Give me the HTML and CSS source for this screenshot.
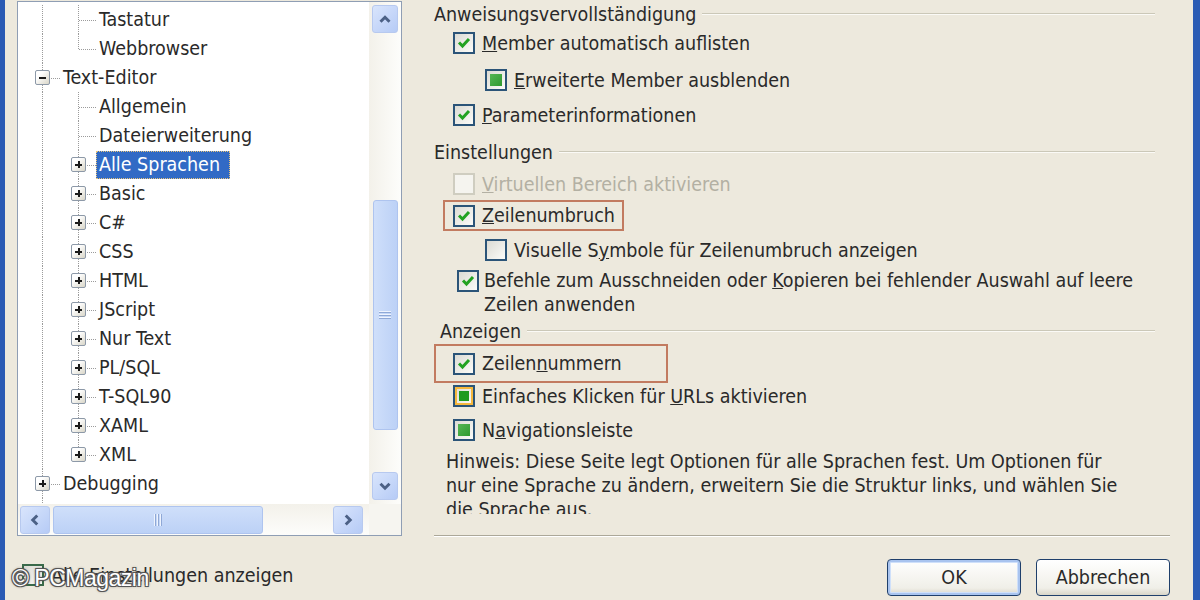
FILE: index.html
```html
<!DOCTYPE html>
<html lang="de">
<head>
    <meta charset="UTF-8">
    <title>Optionen - Text-Editor - Alle Sprachen</title>
    <link rel="stylesheet" href="styles.css">
</head>
<body>
<div class="window">
    <div class="frame"></div>
    <div class="dialog">
        <div class="main">
            <div class="nav">
                <div class="tree-box">
                    <div class="tree-rows">
                        <div class="row"><i class="cell pipe"></i><i class="cell tee"></i><span class="node">Tastatur</span></div>
                        <div class="row"><i class="cell pipe"></i><i class="cell end"></i><span class="node">Webbrowser</span></div>
                        <div class="row"><i class="cell tee"><b class="exp"></b></i><span class="node">Text-Editor</span></div>
                        <div class="row"><i class="cell pipe"></i><i class="cell tee"></i><span class="node">Allgemein</span></div>
                        <div class="row"><i class="cell pipe"></i><i class="cell tee"></i><span class="node">Dateierweiterung</span></div>
                        <div class="row"><i class="cell pipe"></i><i class="cell tee"><b class="exp plus"></b></i><span class="node selected">Alle Sprachen</span></div>
                        <div class="row"><i class="cell pipe"></i><i class="cell tee"><b class="exp plus"></b></i><span class="node">Basic</span></div>
                        <div class="row"><i class="cell pipe"></i><i class="cell tee"><b class="exp plus"></b></i><span class="node">C#</span></div>
                        <div class="row"><i class="cell pipe"></i><i class="cell tee"><b class="exp plus"></b></i><span class="node">CSS</span></div>
                        <div class="row"><i class="cell pipe"></i><i class="cell tee"><b class="exp plus"></b></i><span class="node">HTML</span></div>
                        <div class="row"><i class="cell pipe"></i><i class="cell tee"><b class="exp plus"></b></i><span class="node">JScript</span></div>
                        <div class="row"><i class="cell pipe"></i><i class="cell tee"><b class="exp plus"></b></i><span class="node">Nur Text</span></div>
                        <div class="row"><i class="cell pipe"></i><i class="cell tee"><b class="exp plus"></b></i><span class="node">PL/SQL</span></div>
                        <div class="row"><i class="cell pipe"></i><i class="cell tee"><b class="exp plus"></b></i><span class="node">T-SQL90</span></div>
                        <div class="row"><i class="cell pipe"></i><i class="cell tee"><b class="exp plus"></b></i><span class="node">XAML</span></div>
                        <div class="row"><i class="cell pipe"></i><i class="cell end"><b class="exp plus"></b></i><span class="node">XML</span></div>
                        <div class="row"><i class="cell tee"><b class="exp plus"></b></i><span class="node">Debugging</span></div>
                        <div class="row"><i class="cell pipe"></i></div>
                    </div>

                    <div class="vscroll">
                        <div class="sb-btn up">
                            <svg viewBox="0 0 16 16"><path d="M4 10.5 L8 6.5 L12 10.5" /></svg>
                        </div>
                        <div class="sb-thumb v"><span class="grip"></span></div>
                        <div class="sb-btn down">
                            <svg viewBox="0 0 16 16"><path d="M4 6 L8 10 L12 6" /></svg>
                        </div>
                    </div>

                    <div class="hscroll">
                        <div class="sb-btn left">
                            <svg viewBox="0 0 16 16"><path d="M10 4 L6 8 L10 12" /></svg>
                        </div>
                        <div class="sb-thumb h"><span class="grip"></span></div>
                        <div class="sb-btn right">
                            <svg viewBox="0 0 16 16"><path d="M6 4 L10 8 L6 12" /></svg>
                        </div>
                    </div>
                    <div class="sb-corner"></div>
                </div>
            </div>

            <div class="options">
                <div class="group-title g1"><span>Anweisungsvervollständigung</span></div>
                <label class="opt o-member"><span class="cb checked"><svg viewBox="0 0 18 18"><path d="M4 8.5 L7.5 12 L14 5" /></svg></span><span><u>M</u>ember automatisch auflisten</span></label>
                <label class="opt sub o-erweitert"><span class="cb mixed"></span><span><u>E</u>rweiterte Member ausblenden</span></label>
                <label class="opt o-param"><span class="cb checked"><svg viewBox="0 0 18 18"><path d="M4 8.5 L7.5 12 L14 5" /></svg></span><span><u>P</u>arameterinformationen</span></label>

                <div class="group-title g2"><span>Einstellungen</span></div>
                <label class="opt disabled o-virtual"><span class="cb"></span><span><u>V</u>irtuellen Bereich aktivieren</span></label>
                <div class="mark mark-wrap">
                    <label class="opt"><span class="cb checked"><svg viewBox="0 0 18 18"><path d="M4 8.5 L7.5 12 L14 5" /></svg></span><span><u>Z</u>eilenumbruch</span></label>
                </div>
                <label class="opt sub o-visual"><span class="cb"></span><span>Visuelle S<u>y</u>mbole für Zeilenumbruch anzeigen</span></label>
                <label class="opt multi o-befehle"><span class="cb checked"><svg viewBox="0 0 18 18"><path d="M4 8.5 L7.5 12 L14 5" /></svg></span><span>Befehle zum Ausschneiden oder <u>K</u>opieren bei fehlender Auswahl auf leere<br>Zeilen anwenden</span></label>

                <div class="group-title g3"><span>Anzeigen</span></div>
                <div class="mark mark-lines">
                    <label class="opt"><span class="cb checked"><svg viewBox="0 0 18 18"><path d="M4 8.5 L7.5 12 L14 5" /></svg></span><span>Zeilen<u>n</u>ummern</span></label>
                </div>
                <label class="opt o-urls"><span class="cb mixed hover"></span><span>Einfaches Klicken für <u>U</u>RLs aktivieren</span></label>
                <label class="opt o-nav"><span class="cb mixed"></span><span>N<u>a</u>vigationsleiste</span></label>

                <p class="hint">Hinweis: Diese Seite legt Optionen für alle Sprachen fest. Um Optionen für<br>nur eine Sprache zu ändern, erweitern Sie die Struktur links, und wählen Sie<br>die Sprache aus.</p>
                <div class="separator"></div>
            </div>
        </div>

        <div class="footer">
            <label class="opt show-all"><span class="cb"></span><span>Alle Einstellungen anzeigen</span></label>
            <div class="buttons">
                <button class="btn default">OK</button>
                <button class="btn">Abbrechen</button>
            </div>
            <span class="watermark">© PCMagazin</span>
        </div>
    </div>
    <div class="frame right"></div>
</div>
</body>
</html>
```

FILE: styles.css
```css
body {
    margin: 0;
    font-family: "DejaVu Sans Condensed", "DejaVu Sans", sans-serif;
    font-size: 19.5px;
    color: #2a2a2a;
    background-color: #ece9dc;
}

.window {
    display: flex;
    width: 1200px;
    height: 600px;
    overflow: hidden;
}

.frame {
    width: 5px;
    background-color: #2a5bb4;
}

.frame.right {
    width: 7px;
}

.dialog {
    flex: 1;
    display: flex;
    flex-direction: column;
    background-color: #ede9dd;
}

.main {
    display: flex;
    height: 540px;
}

/* ---------- tree ---------- */

.nav {
    width: 405px;
    padding: 1px 0 0 12px;
    box-sizing: border-box;
}

.tree-box {
    width: 385px;
    height: 535px;
    box-sizing: border-box;
    border: 1px solid #8f9eb4;
    background-color: #fff;
    display: grid;
    grid-template-columns: 1fr 32px;
    grid-template-rows: 1fr 31px;
}

.tree-rows {
    padding: 3px 0 0 6px;
    overflow: hidden;
}

.row {
    display: flex;
    align-items: center;
    height: 29px;
}

.cell {
    flex: none;
    width: 36px;
    height: 100%;
    position: relative;
}

.cell::before {
    content: '';
    position: absolute;
    left: 18px;
    top: 0;
    bottom: 0;
    border-left: 1px dotted #9b9b9b;
}

.cell.end::before {
    bottom: 50%;
}

.cell.tee::after,
.cell.end::after {
    content: '';
    position: absolute;
    left: 19px;
    right: 0;
    top: 50%;
    border-top: 1px dotted #9b9b9b;
}

.exp {
    position: absolute;
    left: 11px;
    top: 7px;
    width: 13px;
    height: 13px;
    border: 1px solid #8d99a8;
    border-radius: 2px;
    background: linear-gradient(135deg, #fff 30%, #d9d6c8);
    z-index: 1;
}

.exp::before {
    content: '';
    position: absolute;
    left: 3px;
    right: 3px;
    top: 6px;
    height: 2px;
    background-color: #1b1b1b;
}

.exp.plus::after {
    content: '';
    position: absolute;
    top: 3px;
    bottom: 3px;
    left: 6px;
    width: 2px;
    background-color: #1b1b1b;
}

.node {
    padding: 0 3px;
    height: 28px;
    line-height: 28px;
    white-space: nowrap;
}

.node.selected {
    padding-right: 10px;
    background-color: #316ac5;
    color: #fff;
    outline: 1px dotted #e9c47a;
    outline-offset: -1px;
}

/* ---------- scrollbars ---------- */

.vscroll {
    display: flex;
    flex-direction: column;
    align-items: center;
    padding: 3px 0 4px;
    background: linear-gradient(to right, #f3f1ea, #fdfdfb);
}

.hscroll {
    display: flex;
    align-items: center;
    padding: 0 6px 0 2px;
    background: linear-gradient(to bottom, #f3f1ea, #fdfdfb);
}

.sb-corner {
    background-color: #f6f5f0;
}

.sb-btn {
    flex: none;
    width: 26px;
    height: 28px;
    box-sizing: border-box;
    border: 1px solid #b7c9ef;
    border-radius: 3px;
    background: linear-gradient(135deg, #d9e5fc, #b6cbf6);
    display: flex;
    align-items: center;
    justify-content: center;
}

.hscroll .sb-btn {
    width: 30px;
    height: 28px;
}

.sb-btn svg {
    width: 18px;
    height: 18px;
}

.sb-btn path {
    fill: none;
    stroke: #4c6186;
    stroke-width: 2.6;
}

.sb-thumb {
    box-sizing: border-box;
    border: 1px solid #aec4ef;
    border-radius: 3px;
    background-color: #c4d7f8;
    display: flex;
    align-items: center;
    justify-content: center;
}

.sb-thumb.v {
    width: 25px;
    height: 230px;
    margin: 167px 0 auto;
    background: linear-gradient(to right, #cfdffa, #bcd1f6);
}

.sb-thumb.h {
    width: 210px;
    height: 28px;
    margin: 0 auto 0 3px;
    background: linear-gradient(to bottom, #cfdffa, #bcd1f6);
}

.grip {
    display: block;
}

.sb-thumb.v .grip {
    width: 12px;
    height: 9px;
    background: repeating-linear-gradient(to bottom, #eef3fd 0 1px, #8fa8d6 1px 2px, transparent 2px 3px);
}

.sb-thumb.h .grip {
    width: 9px;
    height: 12px;
    background: repeating-linear-gradient(to right, #eef3fd 0 1px, #8fa8d6 1px 2px, transparent 2px 3px);
}

/* ---------- options ---------- */

.options {
    flex: 1;
    padding: 2px 23px 0 24px;
}

.group-title {
    display: flex;
    align-items: center;
    height: 24px;
    margin-right: 15px;
    white-space: nowrap;
}

.group-title::after {
    content: '';
    flex: 1;
    margin-left: 6px;
    border-top: 1px solid #cbc8b8;
    border-bottom: 1px solid #fbfaf6;
}

.g2 {
    margin-top: 13px;
}

.g3 {
    margin-top: 2px;
    padding-left: 6px;
}

.opt {
    display: flex;
    align-items: center;
    gap: 7px;
    height: 24px;
    margin-left: 19px;
    white-space: nowrap;
}

.opt.sub {
    margin-left: 51px;
}

.o-member {
    margin-top: 5px;
}

.o-erweitert {
    margin-top: 13px;
}

.o-param {
    margin-top: 11px;
}

.o-virtual {
    margin-top: 8px;
}

.opt.disabled {
    color: #b3b0a3;
}

.o-visual {
    margin-top: 7px;
}

.o-befehle {
    align-items: flex-start;
    height: 48px;
    margin: 7px 0 0 23px;
    gap: 5px;
    line-height: 24px;
}

.o-befehle .cb {
    margin-top: 1px;
}

.o-urls {
    margin-top: 1px;
}

.o-nav {
    margin-top: 10px;
}

.mark {
    box-sizing: border-box;
    border: 2px solid #c27b60;
    display: flex;
    align-items: center;
}

.mark .opt {
    margin-left: 0;
}

.mark-wrap {
    width: 181px;
    height: 31px;
    margin: 4px 0 0 9px;
    padding-left: 8px;
}

.mark-lines {
    width: 234px;
    height: 39px;
    margin-top: 1px;
    padding-left: 17px;
}

.hint {
    margin: 8px 0 0 12px;
    height: 64px;
    line-height: 24px;
    overflow: hidden;
    white-space: nowrap;
}

.separator {
    margin-top: 21px;
    border-top: 1px solid #aca899;
    border-bottom: 1px solid #fff;
}

/* ---------- checkboxes ---------- */

.cb {
    flex: none;
    position: relative;
    width: 22px;
    height: 22px;
    box-sizing: border-box;
    border: 2px solid #2b5478;
    background: linear-gradient(135deg, #dcdbd4, #fbfbf8);
}

.cb svg {
    display: block;
    width: 18px;
    height: 18px;
}

.cb path {
    fill: none;
    stroke: #22a222;
    stroke-width: 3;
}

.cb.mixed::after {
    content: '';
    position: absolute;
    inset: 3px;
    background: linear-gradient(135deg, #55b655, #2f9a2f);
}

.cb.hover {
    box-shadow: inset 0 0 0 2px #f6b83c;
}

.cb.hover::after {
    inset: 4px;
    background: #1f9a1f;
}

.disabled .cb {
    border-color: #cfcdc0;
    background: #f5f4ef;
}

/* ---------- footer ---------- */

.footer {
    position: relative;
    flex: 1;
    display: flex;
    align-items: flex-start;
    padding: 0 23px 0 17px;
}

.opt.show-all {
    margin: 23px 0 0;
}

.show-all .cb {
    border-color: #3a6a4a;
}

.buttons {
    margin: 19px 0 0 auto;
    display: flex;
    gap: 15px;
}

.btn {
    width: 134px;
    height: 37px;
    border: 1px solid #1f3f6b;
    border-radius: 4px;
    background: linear-gradient(to bottom, #fff, #f0efe8 80%, #d8d5c8);
    font-family: inherit;
    font-size: 19.5px;
    color: #2a2a2a;
}

.btn.default {
    box-shadow: inset 0 0 0 2px #a9c4ef, inset 0 0 0 3px #cfe0fa;
}

.watermark {
    position: absolute;
    left: 7px;
    top: 25px;
    font-family: "Liberation Sans", Arial, sans-serif;
    font-size: 23px;
    color: #fff;
    text-shadow: 1px 1px 0 #555, -1px -1px 0 #555, 1px -1px 0 #555, -1px 1px 0 #555, 0 0 3px #333;
    letter-spacing: -0.5px;
}
```
